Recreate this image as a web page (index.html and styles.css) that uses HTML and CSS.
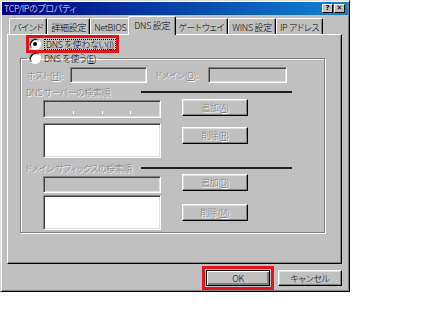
FILE: index.html
```html
<!DOCTYPE html>
<html lang="ja">
<head>
    <meta charset="UTF-8">
    <title>TCP/IPのプロパティ</title>
    <link rel="stylesheet" href="styles.css">
</head>
<body>
    <div class="window">
        <div class="titlebar">
            <span class="title">TCP/IPのプロパティ</span>
            <div class="title-buttons">
                <span class="tbtn">?</span>
                <span class="tbtn">✕</span>
            </div>
        </div>

        <div class="body">
            <div class="tabs">
                <span class="tab">バインド</span>
                <span class="tab">詳細設定</span>
                <span class="tab">NetBIOS</span>
                <span class="tab active">DNS 設定</span>
                <span class="tab">ゲートウェイ</span>
                <span class="tab">WINS 設定</span>
                <span class="tab">IP アドレス</span>
            </div>

            <div class="panel">
                <label class="radio marked">
                    <span class="dot checked"></span>
                    <span class="focus">DNS を使わない(<u>I</u>)</span>
                </label>

                <fieldset class="group">
                    <legend class="radio">
                        <span class="dot"></span>
                        <span>DNS を使う(<u>E</u>)</span>
                    </legend>

                    <div class="host-row">
                        <span class="off host-label">ホスト(<u>H</u>):</span>
                        <span class="field host"></span>
                        <span class="off domain-label">ドメイン(<u>O</u>):</span>
                        <span class="field domain"></span>
                    </div>

                    <div class="section-head">
                        <span class="off head-label">DNS サーバーの検索順</span>
                        <span class="rule"></span>
                    </div>

                    <div class="pair">
                        <div class="field ipbox">
                            <span class="seg"></span><span class="sep"></span>
                            <span class="seg"></span><span class="sep"></span>
                            <span class="seg"></span><span class="sep"></span>
                            <span class="seg"></span>
                        </div>
                        <span class="btn off add-1">追加(<u>A</u>)</span>
                    </div>

                    <div class="pair">
                        <div class="listbox list-1"></div>
                        <span class="btn off del-1">削除(<u>R</u>)</span>
                    </div>

                    <div class="section-head second">
                        <span class="off head-label">ドメイン サフィックスの検索順</span>
                        <span class="rule"></span>
                    </div>

                    <div class="pair">
                        <div class="field suffix"></div>
                        <span class="btn off add-2">追加(<u>D</u>)</span>
                    </div>

                    <div class="pair">
                        <div class="listbox list-2"></div>
                        <span class="btn off del-2">削除(<u>M</u>)</span>
                    </div>
                </fieldset>
            </div>

            <div class="actions">
                <span class="btn default marked-ok">OK</span>
                <span class="btn">キャンセル</span>
            </div>
        </div>
    </div>
</body>
</html>
```

FILE: styles.css
```css
* {
    box-sizing: border-box;
    margin: 0;
    padding: 0;
}

body {
    background: #fff;
    font-family: "Noto Sans CJK JP", sans-serif;
    font-size: 9px;
    font-weight: 300;
    line-height: 1;
    letter-spacing: -0.3px;
    font-feature-settings: "palt";
    color: #000;
}

u {
    text-decoration: underline;
    text-underline-offset: 1px;
}

.window {
    width: 350px;
    height: 292px;
    background: #c0c0c0;
    border: 1px solid;
    border-color: #dfdfdf #000 #000 #dfdfdf;
    box-shadow: inset 1px 1px #fff, inset -1px -1px #808080;
    padding: 1px;
}

.titlebar {
    height: 13px;
    display: flex;
    align-items: center;
    justify-content: space-between;
    padding: 0 3px 0 2px;
    background: linear-gradient(90deg, #000080, #1084d0);
    color: #fff;
}

.title-buttons {
    display: flex;
    gap: 1px;
}

.tbtn {
    width: 11px;
    height: 9px;
    display: flex;
    align-items: center;
    justify-content: center;
    background: #c0c0c0;
    border: 1px solid;
    border-color: #fff #000 #000 #fff;
    color: #000;
    font-family: "DejaVu Sans", sans-serif;
    font-size: 7px;
    font-weight: bold;
    letter-spacing: 0;
}

.body {
    padding: 1px 6px 0 5px;
}

/* tab strip */
.tabs {
    height: 18px;
    display: flex;
    align-items: flex-end;
    padding-left: 2px;
}

.tab {
    height: 16px;
    display: flex;
    align-items: center;
    padding: 1px 3px 0;
    border: 1px solid;
    border-bottom: none;
    border-color: #fff #000 transparent #fff;
    border-radius: 2px 2px 0 0;
    box-shadow: inset -1px 0 #808080;
    white-space: nowrap;
}

.tab.active {
    height: 19px;
    margin: 0 -2px -1px;
    padding: 0 5px 2px;
    position: relative;
    z-index: 1;
    background: #c0c0c0;
}

.panel {
    height: 230px;
    border: 1px solid;
    border-color: #fff #000 #000 #fff;
    box-shadow: inset -1px -1px #808080;
    padding: 3px 0 0 12px;
}

/* radios */
.radio {
    display: flex;
    align-items: center;
    gap: 3px;
    height: 12px;
}

.marked {
    width: max-content;
    margin-left: 9px;
    outline: 3px solid #e3131b;
}

.dot {
    width: 12px;
    height: 12px;
    border-radius: 50%;
    background: #fff;
    border: 1px solid;
    border-color: #808080 #fff #fff #808080;
    box-shadow: inset 1px 1px #000;
    display: flex;
    align-items: center;
    justify-content: center;
    flex-shrink: 0;
}

.dot.checked::after {
    content: "";
    width: 4px;
    height: 4px;
    border-radius: 50%;
    background: #000;
}

.focus {
    border: 1px dotted #000;
    padding: 0 1px;
    white-space: nowrap;
}

/* group box */
.group {
    width: 305px;
    margin-top: 2px;
    padding: 0 6px 2px;
    border: 1px solid #808080;
    box-shadow: 1px 1px 0 #fff, inset 1px 1px 0 #fff;
}

.group legend {
    margin-left: 0;
    padding: 0 2px;
    white-space: nowrap;
}

.off {
    color: #808080;
    text-shadow: 1px 1px 0 #fff;
    white-space: nowrap;
}

.field {
    height: 16px;
    background: #c0c0c0;
    border: 1px solid;
    border-color: #808080 #fff #fff #808080;
    box-shadow: inset 1px 1px #404040, inset -1px -1px #dfdfdf;
}

.host-row {
    display: flex;
    align-items: center;
    margin-top: 3px;
    height: 16px;
}

.host-label {
    width: 43px;
}

.field.host {
    width: 77px;
}

.domain-label {
    width: 53px;
    margin-left: 8px;
}

.field.domain {
    width: 79px;
}

.section-head {
    display: flex;
    align-items: center;
    height: 10px;
    margin-top: 4px;
    margin-left: -1px;
}

.section-head.second {
    margin-top: 5px;
    margin-left: -2px;
}

.head-label {
    width: 115px;
    flex-shrink: 0;
    letter-spacing: -0.5px;
}

.section-head.second .head-label {
    width: 116px;
}

.rule {
    flex: 1;
    height: 2px;
    margin-right: 26px;
    background: #1e1e1e;
}

.pair {
    display: flex;
    align-items: flex-start;
    gap: 21px;
    margin-left: 16px;
}

.ipbox {
    width: 118px;
    height: 18px;
    margin-top: 3px;
    display: flex;
    align-items: flex-end;
    padding: 2px 2px 3px;
}

.seg {
    flex: 1;
}

.sep {
    width: 1px;
    height: 3px;
    background: #fff;
}

.listbox {
    width: 118px;
    height: 35px;
    background: #fff;
    border: 1px solid;
    border-color: #808080 #fff #fff #808080;
    box-shadow: inset 1px 1px #404040, inset -1px -1px #dfdfdf;
}

.list-1 {
    margin-top: 5px;
}

.field.suffix {
    width: 118px;
    height: 17px;
    margin-top: 3px;
}

.list-2 {
    margin-top: 2px;
}

/* push buttons */
.btn {
    width: 66px;
    height: 17px;
    display: flex;
    align-items: center;
    justify-content: center;
    background: #c0c0c0;
    border: 1px solid;
    border-color: #fff #000 #000 #fff;
    box-shadow: inset -1px -1px #808080, inset 1px 1px #dfdfdf;
    white-space: nowrap;
}

.add-1 {
    margin-top: 2px;
}

.del-1 {
    margin-top: 9px;
}

.add-2 {
    margin-top: 1px;
}

.del-2 {
    margin-top: 11px;
}

.actions {
    display: flex;
    justify-content: flex-end;
    gap: 8px;
    margin-top: 6px;
}

.actions .btn {
    width: 64px;
    height: 16px;
}

.btn.default {
    border-color: #000;
    box-shadow: inset 1px 1px #fff, inset -2px -2px #808080;
}

.marked-ok {
    outline: 3px solid #e3131b;
    outline-offset: 1px;
}
```
